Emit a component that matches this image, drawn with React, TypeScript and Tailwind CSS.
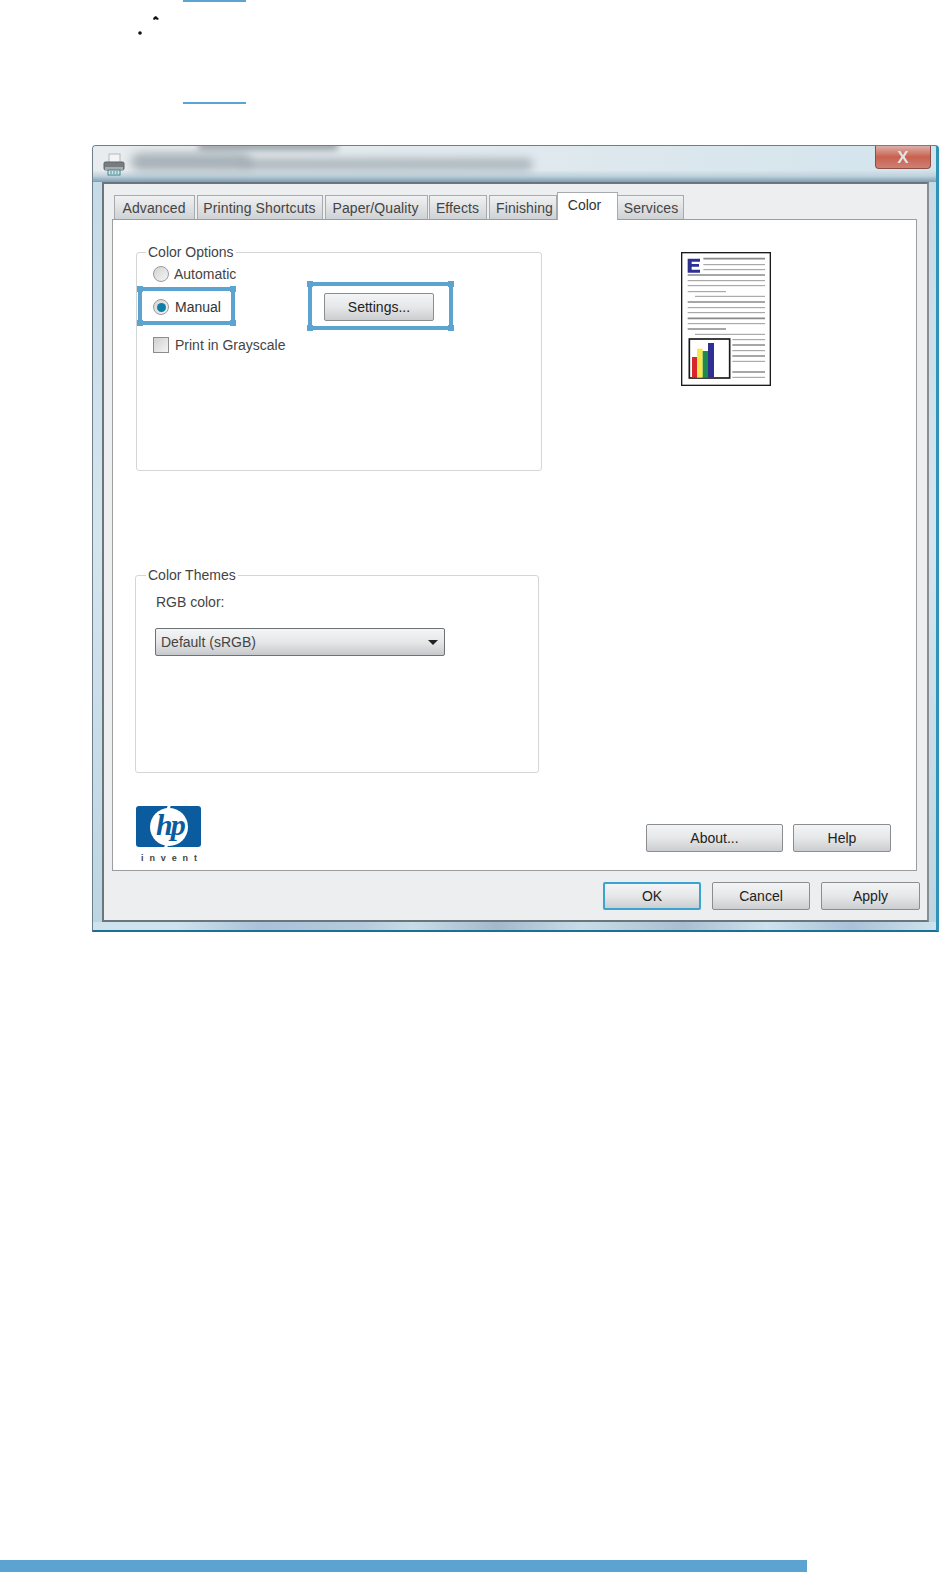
import type { ReactNode } from 'react';

const font = { fontFamily: '"Liberation Sans", Arial, sans-serif' };

const tabs = [
  { label: 'Advanced', width: 'w-[81px]', gap: 'ml-[0px]', pad: 'pr-[1px]' },
  { label: 'Printing Shortcuts', width: 'w-[126px]', gap: 'ml-[2px]', pad: 'pr-[1px]' },
  { label: 'Paper/Quality', width: 'w-[103px]', gap: 'ml-[2px]', pad: 'pr-[2px]' },
  { label: 'Effects', width: 'w-[58px]', gap: 'ml-[1px]', pad: 'pr-[1px]' },
  { label: 'Finishing', width: 'w-[68px]', gap: 'ml-[2px]', pad: 'pl-[3px]' },
];

// y, x1, x2, thick in the preview thumbnail (units are 1/3 px)
const previewLines: [number, number, number, boolean][] = [
  [20, 67, 252, true], [38, 67, 252, false], [53, 67, 252, false], [69, 20, 252, true],
  [86, 20, 252, false], [101, 20, 252, false], [119, 20, 135, false], [133, 42, 252, false],
  [150, 20, 252, true], [167, 20, 252, false], [182, 20, 252, false], [199, 20, 252, true],
  [215, 20, 252, false], [231, 20, 135, true], [247, 42, 252, false], [263, 154, 252, false],
  [279, 154, 252, true], [296, 154, 252, false], [312, 154, 252, true], [328, 154, 252, false],
  [360, 154, 252, true], [376, 154, 252, false],
];

function PreviewPage() {
  return (
    <svg width="90" height="134" viewBox="0 0 270 402" className="block">
      <rect x="2" y="2" width="266" height="398" fill="#fff" stroke="#1a1a1a" strokeWidth="4" />
      <path d="M20 20h37v9H32v7h22v8H32v9h25v9H20z" fill="#2e3192" />
      {previewLines.map(([y, x1, x2, thick]) => (
        <line key={y} x1={x1} x2={x2} y1={y} y2={y} stroke={thick ? '#8a8a8a' : '#9a9a9a'} strokeWidth={thick ? 5 : 3} />
      ))}
      <rect x="25" y="261" width="121" height="117" fill="#fff" stroke="#1a1a1a" strokeWidth="5" />
      <rect x="33" y="315" width="15" height="62" fill="#d9252c" />
      <rect x="48" y="290" width="17" height="87" fill="#f7e84a" />
      <rect x="65" y="297" width="16" height="80" fill="#1f8a4c" />
      <rect x="81" y="273" width="18" height="104" fill="#2e3192" />
    </svg>
  );
}

function PrinterIcon() {
  return (
    <svg width="22" height="24" viewBox="0 0 22 24" className="block">
      <rect x="6" y="1" width="11" height="9" fill="#f4f4f4" stroke="#b4b8bb" />
      <rect x="1" y="9" width="20" height="8" rx="1.5" fill="#767c80" stroke="#5c6266" />
      <rect x="2" y="14" width="18" height="3" fill="#a6abaf" />
      <rect x="5" y="17" width="12" height="5" fill="#cfe8e8" stroke="#4f7f86" />
      <path d="M8 18v3M11 18v3M14 18v3" stroke="#2f9aa0" />
    </svg>
  );
}

function XpButton({ children, className, focused }: { children: ReactNode; className: string; focused?: boolean }) {
  return (
    <button
      className={`h-[28px] rounded-[2px] border bg-gradient-to-b from-[#f3f4f5] via-[#e6e7e8] to-[#cbced1] text-[14px] text-[#222] ${
        focused ? 'border-2 border-[#3ba3cf]' : 'border-[#8a8e90]'
      } ${className}`}
    >
      {children}
    </button>
  );
}

function GroupBox({ title, titleLeft, className, children }: { title: string; titleLeft: string; className: string; children: ReactNode }) {
  return (
    <div className={`relative rounded-[3px] border border-[#d4d6d6] ${className}`}>
      <span className={`absolute top-[-11px] bg-white px-[2px] text-[14px] leading-[20px] text-[#444] ${titleLeft}`}>{title}</span>
      {children}
    </div>
  );
}

function Radio({ checked }: { checked?: boolean }) {
  return (
    <span className="flex h-[16px] w-[16px] shrink-0 items-center justify-center rounded-full border border-[#9a9a9a] bg-gradient-to-br from-[#d4d4d4] to-[#f4f4f4]">
      {checked && <span className="h-[9px] w-[9px] rounded-full bg-[#0f7fa8]" />}
    </span>
  );
}

// blue callout frame with the little square nubs on its corners
function Callout({ className }: { className: string }) {
  const nub = 'absolute h-[6px] w-[6px] bg-[#5ba3d0]';
  return (
    <div className={`absolute border-4 border-[#5ba3d0] ${className}`}>
      <span className={`${nub} top-[-5px] left-[-5px]`} />
      <span className={`${nub} top-[-5px] right-[-5px]`} />
      <span className={`${nub} bottom-[-5px] left-[-5px]`} />
      <span className={`${nub} right-[-5px] bottom-[-5px]`} />
    </div>
  );
}

function Logo() {
  return (
    <div className="w-[66px]">
      <div className="relative flex h-[41px] w-[65px] items-center justify-center overflow-hidden rounded-[3px] bg-[#0b5c9e]">
        <div className="h-[38px] w-[38px] rounded-full bg-white" />
        <div className="absolute top-[-4px] left-[31px] h-[12px] w-[3px] rotate-[18deg] bg-white" />
        <div className="absolute bottom-[-4px] left-[29px] h-[12px] w-[3px] rotate-[18deg] bg-white" />
        <span
          className="absolute top-[1px] left-[20px] text-[30px] leading-[36px] font-bold text-[#0b5c9e] italic"
          style={{ fontFamily: '"Liberation Serif", serif', letterSpacing: '-2px' }}
        >
          hp
        </span>
      </div>
      <div className="mt-[6px] flex justify-between px-[5px] text-[9px] leading-[10px] font-bold text-[#444]">
        {'invent'.split('').map((c, i) => (
          <span key={i}>{c}</span>
        ))}
      </div>
    </div>
  );
}

export default function App() {
  return (
    <div className="relative flex h-[1572px] w-[940px] flex-col overflow-hidden bg-white" style={font}>
      {/* leftovers of the page above the dialog */}
      <div className="ml-[183px] h-[2px] w-[63px] bg-[#5ba3d0]" />
      <svg width="30" height="24" viewBox="0 0 30 24" className="mt-[12px] ml-[135px] block">
        <path d="M19 3l2-1 1 1 1 1 1 1-2 1-1-1-2 1-1-1z" fill="#111" />
        <circle cx="5" cy="19" r="1.8" fill="#111" />
      </svg>
      <div className="mt-[64px] ml-[183px] h-[2px] w-[63px] bg-[#5ba3d0]" />

      {/* Dialog window */}
      <div className="mt-[41px] ml-[92px] flex h-[787px] w-[847px] shrink-0 flex-col overflow-hidden rounded-t-[4px] border border-r-[3px] border-b-[2px] border-[#6d7f88] border-r-[#2f93b8] border-b-[#1b6f92] bg-gradient-to-b from-[#c4dae6] via-[#d5e5ee] to-[#bcd5e2]">
        {/* Title bar */}
        <div className="relative flex h-[36px] shrink-0 items-start overflow-hidden bg-gradient-to-r from-[#e8ecee] via-[#e0e9ee] to-[#d3e4ed] pt-[7px] pl-[10px]">
          <div className="absolute inset-x-0 bottom-0 h-[12px] bg-gradient-to-b from-transparent via-[#c0d2dc] to-[#7f9db2]" />
          <div className="relative">
            <PrinterIcon />
          </div>
          <div className="absolute top-[7px] left-[38px] h-[18px] w-[120px] rounded-full bg-[#8d9aa2] opacity-70 blur-[5px]" />
          <div className="absolute top-[12px] left-[150px] h-[13px] w-[290px] rounded-full bg-[#8d9aa2] opacity-60 blur-[4px]" />
          <div className="absolute top-[-3px] left-[105px] h-[7px] w-[140px] rounded-full bg-[#6f7b83] opacity-70 blur-[3px]" />
          <div className="absolute top-0 right-[5px] flex h-[23px] w-[56px] items-center justify-center rounded-b-[4px] border border-t-0 border-[#8a5048] bg-gradient-to-b from-[#d9b0a6] via-[#c9604e] to-[#cf8074]">
            <span className="text-[17px] leading-none font-bold text-[#dfe6e6] blur-[0.4px]">X</span>
          </div>
        </div>

        {/* Client area */}
        <div className="mx-[9px] mr-[7px] flex flex-1 flex-col border-2 border-[#6a767c] border-r-[#8a8e90] bg-[#eceef0] pr-[10px] pl-[8px]">
          <div className="flex h-[35px] shrink-0 items-end pl-[2px]">
            {tabs.map((t) => (
              <div
                key={t.label}
                className={`flex h-[24px] items-center justify-center border border-b-0 border-[#a8abad] bg-gradient-to-b from-[#f0f1f2] to-[#cfd2d5] pt-[1px] text-[14px] tracking-[0.1px] text-[#444] ${t.width} ${t.gap} ${t.pad}`}
              >
                {t.label}
              </div>
            ))}
            <div className="relative z-10 -mb-px flex h-[28px] w-[61px] items-start justify-center border border-b-0 border-[#a8abad] bg-white pt-[2px] pr-[6px] text-[14px] text-[#333]">
              Color
            </div>
            <div className="flex h-[24px] w-[66px] items-center justify-center border border-b-0 border-l-0 border-[#a8abad] bg-gradient-to-b from-[#f0f1f2] to-[#cfd2d5] pt-[1px] pl-[1px] text-[14px] tracking-[0.1px] text-[#444]">
              Services
            </div>
          </div>

          {/* Tab sheet */}
          <div className="flex h-[652px] shrink-0 flex-col border border-[#9b9ea0] bg-white pl-[23px]">
            <div className="flex">
              <div className="w-[406px]">
                <GroupBox title="Color Options" titleLeft="left-[9px]" className="mt-[32px] h-[219px] w-[406px]">
                  <div className="mt-[13px] ml-[16px] flex h-[16px] items-center gap-[5px] text-[14px] text-[#444]">
                    <Radio />
                    <span>Automatic</span>
                  </div>
                  <div className="mt-[17px] ml-[16px] flex h-[16px] items-center gap-[6px] text-[14px] text-[#333]">
                    <Radio checked />
                    <span>Manual</span>
                  </div>
                  <div className="mt-[22px] ml-[16px] flex h-[16px] items-center gap-[6px] text-[14px] text-[#444]">
                    <span className="h-[16px] w-[16px] shrink-0 border border-[#8c8c8c] bg-gradient-to-br from-[#d0d0d0] to-[#f4f4f4]" />
                    <span>Print in Grayscale</span>
                  </div>
                </GroupBox>
                <GroupBox title="Color Themes" titleLeft="left-[10px]" className="mt-[104px] -ml-px h-[198px] w-[404px]">
                  <div className="mt-[16px] ml-[20px] text-[14px] leading-[20px] text-[#444]">RGB color:</div>
                  <div className="mt-[16px] ml-[19px] flex h-[28px] w-[290px] items-center justify-between rounded-[2px] border border-[#6e7274] bg-gradient-to-b from-[#f4f5f6] via-[#e6e7e8] to-[#c6c9cc] pr-[4px] pl-[5px] text-[14px] text-[#444]">
                    <span>Default (sRGB)</span>
                    <span className="mr-[2px] h-0 w-0 border-x-[5px] border-t-[5px] border-x-transparent border-t-[#222]" />
                  </div>
                </GroupBox>
              </div>
              <div className="mt-[32px] ml-[139px]">
                <PreviewPage />
              </div>
            </div>

            <div className="flex flex-1 items-start justify-between pr-[25px]">
              <div className="mt-[33px]">
                <Logo />
              </div>
              <div className="mt-[51px] flex gap-[10px]">
                <XpButton className="w-[137px]">About...</XpButton>
                <XpButton className="w-[98px]">Help</XpButton>
              </div>
            </div>
          </div>

          {/* Dialog buttons */}
          <div className="mt-[11px] -mr-[3px] flex justify-end gap-[11px]">
            <XpButton focused className="w-[98px]">OK</XpButton>
            <XpButton className="w-[98px]">Cancel</XpButton>
            <XpButton className="w-[99px]">Apply</XpButton>
          </div>
        </div>
        <div className="h-[8px] shrink-0 bg-[linear-gradient(90deg,#cfe3ee_0%,#cfe3ee_10%,#a9c2d8_20%,#b5cbdd_32%,#c9dde8_38%,#a3b8cc_48%,#c9dde8_58%,#a9bed2_70%,#cfe3ee_80%,#a9c2d8_90%,#cfe3ee_100%)]" />
      </div>

      {/* Callout highlights */}
      <Callout className="top-[287px] left-[138px] h-[38px] w-[97px]" />
      <Callout className="top-[282px] left-[308px] h-[48px] w-[145px]" />
      <div className="absolute top-[293px] left-[324px]">
        <XpButton className="w-[110px]">Settings...</XpButton>
      </div>

      {/* Footer bar */}
      <div className="mt-auto h-[12px] w-[807px] bg-[#5ba3d0]" />
    </div>
  );
}
